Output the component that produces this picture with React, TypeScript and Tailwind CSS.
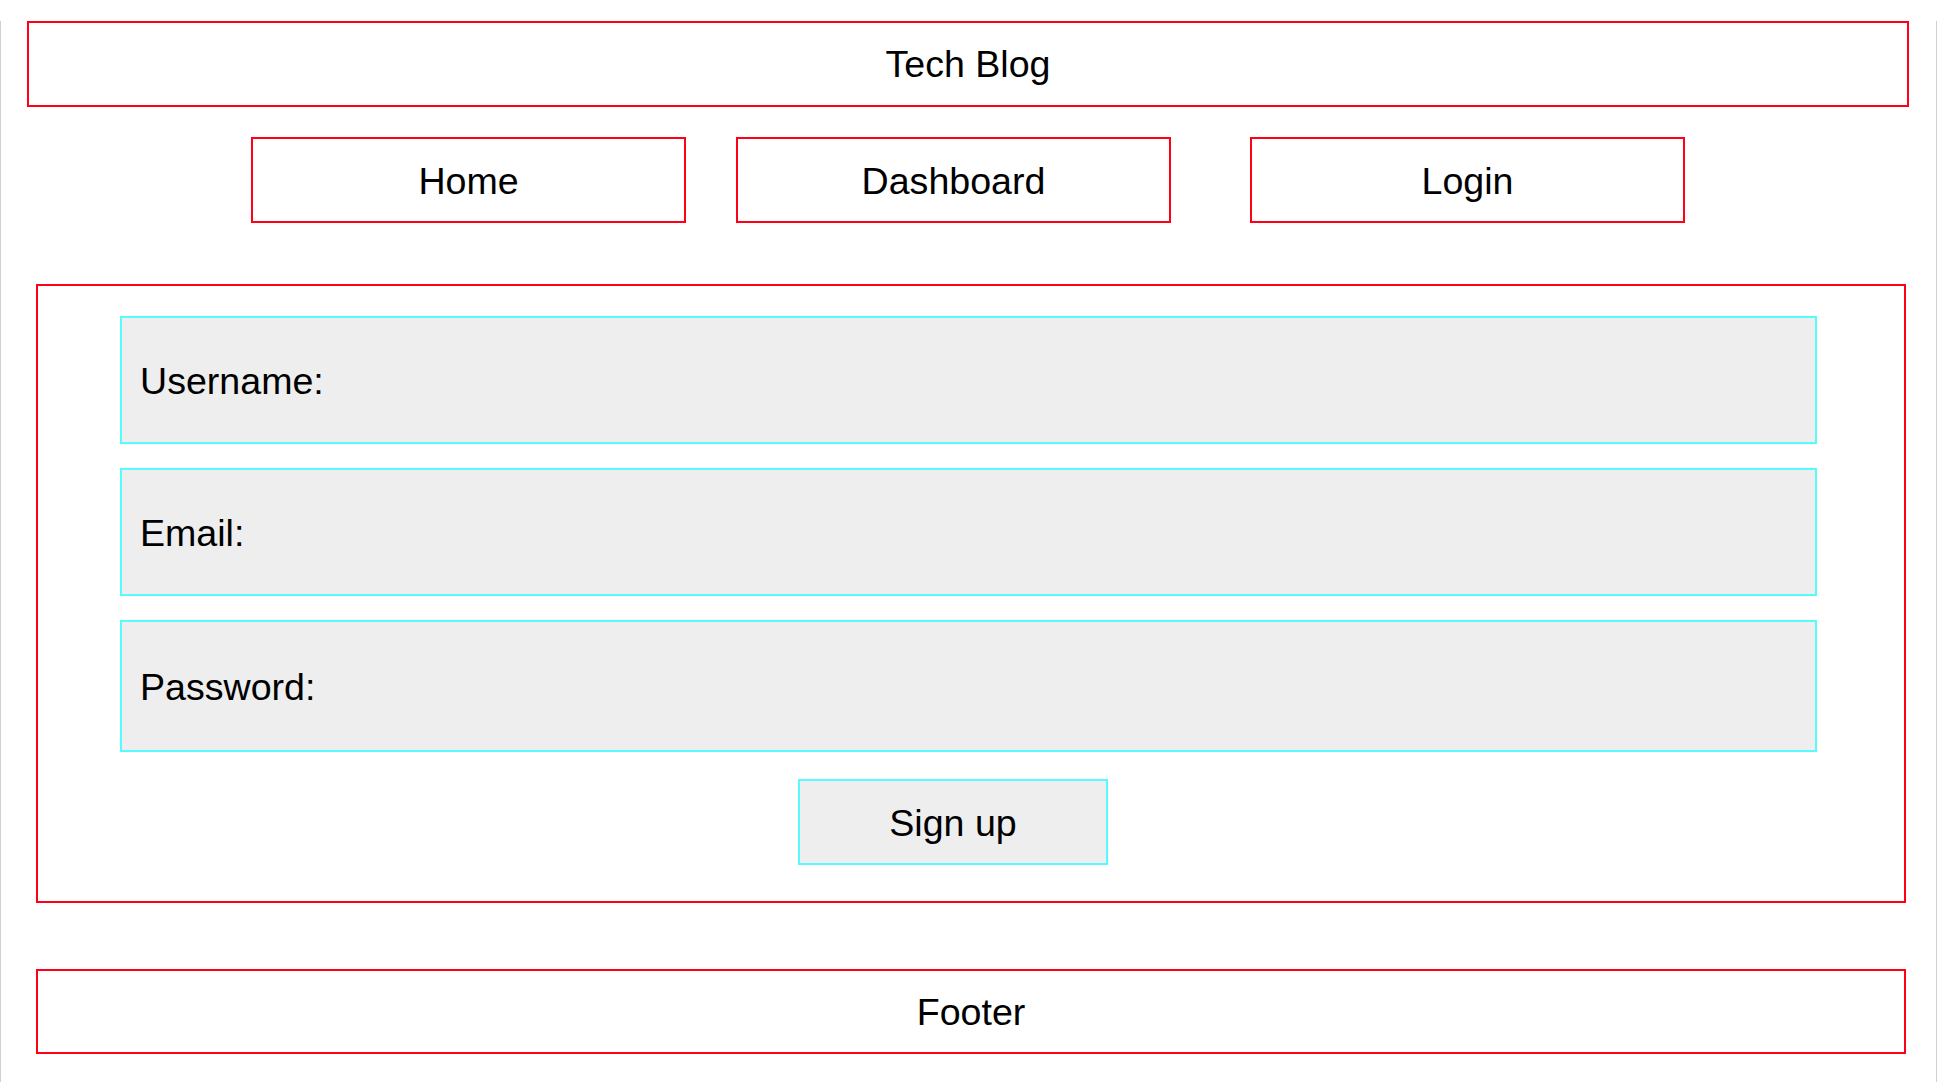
import React from 'react'

const font = { fontFamily: '"Liberation Sans", Arial, sans-serif' }

const fields = [
  { label: 'Username:', h: 'h-[128px]' },
  { label: 'Email:', h: 'h-[128px]' },
  { label: 'Password:', h: 'h-[132px]' },
]

function NavBox({ label, className }: { label: string; className: string }) {
  return (
    <a
      href="#"
      className={`flex h-[86px] w-[435px] items-center justify-center border-2 border-[#ff0018] pt-[2px] text-[37.6px] text-black ${className}`}
    >
      {label}
    </a>
  )
}

export default function App() {
  return (
    <div
      className="min-h-screen w-[1937px] border-x border-[#d0d0d0] bg-white text-black"
      style={font}
    >
      {/* Header */}
      <header className="ml-[26px] mt-[21px] flex h-[86px] w-[1882px] items-center justify-center border-2 border-[#ff0018] pt-[1px] text-[37.6px]">
        Tech Blog
      </header>

      {/* Nav */}
      <nav className="mt-[30px] flex">
        <NavBox label="Home" className="ml-[250px]" />
        <NavBox label="Dashboard" className="ml-[50px] w-[434px]" />
        <NavBox label="Login" className="ml-[79px]" />
      </nav>

      {/* Sign up form */}
      <form className="ml-[35px] mt-[61px] flex w-[1870px] flex-col border-2 border-[#ff0018] pb-[36px] pl-[82px] pt-[30px]">
        <div className="flex w-[1697px] flex-col gap-[24px]">
          {fields.map((f) => (
            <div
              key={f.label}
              className={`flex ${f.h} items-center border-2 border-[#55fbfd] bg-[#eeeeee] pl-[18px] pt-[2px] text-[37.6px]`}
            >
              <label>{f.label}</label>
            </div>
          ))}
        </div>
        <button
          type="button"
          className="ml-[678px] mt-[27px] flex h-[86px] w-[310px] items-center justify-center border-2 border-[#55fbfd] bg-[#eeeeee] pt-[2px] text-[37.6px]"
        >
          Sign up
        </button>
      </form>

      {/* Footer */}
      <footer className="ml-[35px] mt-[66px] flex h-[85px] w-[1870px] items-center justify-center border-2 border-[#ff0018] pt-[1px] text-[37.6px]">
        Footer
      </footer>
    </div>
  )
}
